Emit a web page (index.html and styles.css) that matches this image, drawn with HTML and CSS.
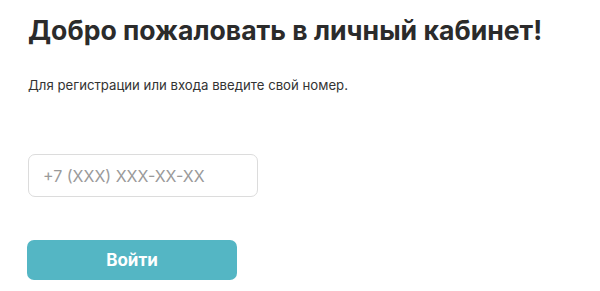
FILE: index.html
```html
<!DOCTYPE html>
<html lang="ru">
<head>
    <meta charset="UTF-8">
    <meta name="viewport" content="width=device-width, initial-scale=1.0">
    <title>Личный кабинет</title>
    <link rel="stylesheet" href="styles.css">
</head>
<body>

<div class="login">
    <h1>Добро пожаловать в личный кабинет!</h1>
    <p class="hint">Для регистрации или входа введите свой номер.</p>
    <input type="tel" class="phone" placeholder="+7 (XXX) XXX-XX-XX">
    <button class="submit">Войти</button>
</div>

</body>
</html>
```

FILE: styles.css
```css
body {
    margin: 0;
    background: #fff;
    font-family: 'Inter', 'Roboto', sans-serif;
    color: #2b2b2b;
}
.login {
    display: flex;
    flex-direction: column;
    align-items: flex-start;
    padding: 12px 0 0 28px;
}
h1 {
    margin: 0;
    font-size: 26.6px;
    font-weight: 700;
    line-height: 36px;
}
.hint {
    margin: 29px 0 0;
    font-size: 13.2px;
    line-height: 16px;
    color: #333;
}
.phone {
    box-sizing: border-box;
    width: 230px;
    height: 43px;
    margin-top: 61px;
    padding: 0 14px;
    border: 1px solid #dcdcdc;
    border-radius: 7px;
    font-family: 'Inter', sans-serif;
    font-size: 16px;
    color: #333;
    outline: none;
}
.phone::placeholder {
    color: #9a9a9a;
}
.submit {
    box-sizing: border-box;
    width: 210px;
    height: 40px;
    margin-top: 43px;
    margin-left: -1px;
    border: none;
    border-radius: 7px;
    background: #54b6c4;
    color: #fff;
    font-family: 'Inter', sans-serif;
    font-size: 17px;
    font-weight: 700;
    cursor: pointer;
}
```
